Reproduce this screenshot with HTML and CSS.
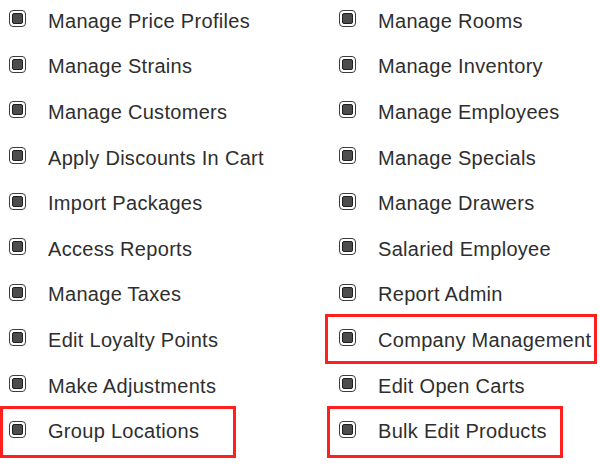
FILE: index.html
```html
<!DOCTYPE html>
<html lang="en">
<head>
<meta charset="utf-8">
<title>Permissions</title>
<link rel="stylesheet" href="styles.css">
</head>
<body>
<div class="perms">
  <ul class="col">
    <li class="item"><span class="cb"><span class="cb-fill"></span></span><span class="label">Manage Price Profiles</span></li>
    <li class="item"><span class="cb"><span class="cb-fill"></span></span><span class="label">Manage Strains</span></li>
    <li class="item"><span class="cb"><span class="cb-fill"></span></span><span class="label">Manage Customers</span></li>
    <li class="item"><span class="cb"><span class="cb-fill"></span></span><span class="label">Apply Discounts In Cart</span></li>
    <li class="item"><span class="cb"><span class="cb-fill"></span></span><span class="label">Import Packages</span></li>
    <li class="item"><span class="cb"><span class="cb-fill"></span></span><span class="label">Access Reports</span></li>
    <li class="item"><span class="cb"><span class="cb-fill"></span></span><span class="label">Manage Taxes</span></li>
    <li class="item"><span class="cb"><span class="cb-fill"></span></span><span class="label">Edit Loyalty Points</span></li>
    <li class="item"><span class="cb"><span class="cb-fill"></span></span><span class="label">Make Adjustments</span></li>
    <li class="item hl hl-group"><span class="cb"><span class="cb-fill"></span></span><span class="label">Group Locations</span></li>
  </ul>
  <ul class="col">
    <li class="item"><span class="cb"><span class="cb-fill"></span></span><span class="label">Manage Rooms</span></li>
    <li class="item"><span class="cb"><span class="cb-fill"></span></span><span class="label">Manage Inventory</span></li>
    <li class="item"><span class="cb"><span class="cb-fill"></span></span><span class="label">Manage Employees</span></li>
    <li class="item"><span class="cb"><span class="cb-fill"></span></span><span class="label">Manage Specials</span></li>
    <li class="item"><span class="cb"><span class="cb-fill"></span></span><span class="label">Manage Drawers</span></li>
    <li class="item"><span class="cb"><span class="cb-fill"></span></span><span class="label">Salaried Employee</span></li>
    <li class="item"><span class="cb"><span class="cb-fill"></span></span><span class="label">Report Admin</span></li>
    <li class="item hl hl-company"><span class="cb"><span class="cb-fill"></span></span><span class="label">Company Management</span></li>
    <li class="item"><span class="cb"><span class="cb-fill"></span></span><span class="label">Edit Open Carts</span></li>
    <li class="item hl hl-bulk"><span class="cb"><span class="cb-fill"></span></span><span class="label">Bulk Edit Products</span></li>
  </ul>
</div>
</body>
</html>
```

FILE: styles.css
```css
html, body {
  margin: 0;
  padding: 0;
  background: #ffffff;
}

body {
  font-family: "Liberation Sans", Arial, Helvetica, sans-serif;
  color: #2e2e2e;
  min-height: 467px;
  overflow: hidden;
}

.perms {
  display: grid;
  grid-template-columns: 330px 270px;
  margin-top: -2px;
  padding-bottom: 12px;
}

.col {
  list-style: none;
  margin: 0;
  padding: 0;
  display: flex;
  flex-direction: column;
}

.item {
  position: relative;
  height: 45.6px;
  display: flex;
  align-items: center;
  padding-left: 9px;
  font-size: 20px;
  line-height: 1;
}

.cb {
  flex: none;
  box-sizing: border-box;
  width: 17px;
  height: 17px;
  border: 1.5px solid #3c3c3c;
  border-radius: 4px;
  padding: 2px;
  margin-right: 22px;
  margin-bottom: 4px;
  background: #fff;
  display: flex;
}

.cb-fill {
  flex: 1;
  background: #4d4d4d;
  border: 1px solid #1f1f1f;
  border-radius: 2px;
}

.label {
  white-space: nowrap;
  letter-spacing: 0.3px;
}

.hl::after {
  content: "";
  position: absolute;
  top: -2px;
  bottom: -4px;
  border: 3px solid #ff1f1f;
  box-sizing: border-box;
  pointer-events: none;
}

.hl-group::after {
  left: 0;
  width: 236px;
}

.hl-company::after {
  top: -3px;
  bottom: -1px;
  left: -5px;
  width: 272px;
}

.hl-bulk::after {
  left: -3px;
  width: 236px;
}
```
